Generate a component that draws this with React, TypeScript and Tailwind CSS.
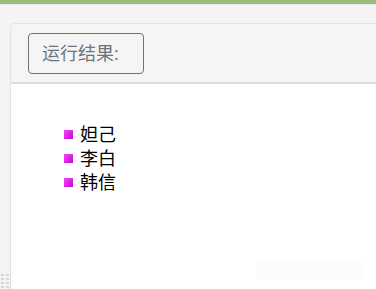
export default function App() {
  const heroes = ["妲己", "李白", "韩信"]

  return (
    <div
      className="relative h-[289px] w-[376px] overflow-hidden bg-[#f4f4f4]"
      style={{ fontFamily: '"Open Sans", "Noto Sans CJK SC", sans-serif' }}
    >
      {/* Top accent */}
      <div className="h-[4px] bg-[#9aba7a]" />
      <div className="h-px bg-[#e6e9ee]" />

      {/* Panel */}
      <div className="ml-[10px] mt-[18px] h-[300px] rounded-tl-[5px] border-l border-t border-[#e3e3e3] bg-white">
        <div className="flex h-[60px] items-center rounded-tl-[5px] border-b-2 border-[#dcdcdc] bg-[#f5f5f5] pl-[17px]">
          <button className="flex h-[41px] w-[116px] items-center rounded-[4px] border border-[#6c757d] pl-[13px] text-[18px] text-[#6c757d]">
            运行结果:
          </button>
        </div>

        <ul className="pl-[53px] pt-[38px] text-[18px] leading-[24px] text-black">
          {heroes.map((name) => (
            <li key={name} className="flex items-center">
              <span className="mr-[7px] h-[9px] w-[9px] bg-gradient-to-br from-[#ff40ff] to-[#b800d0]" />
              {name}
            </li>
          ))}
        </ul>
      </div>

      {/* Resize grip */}
      <div className="absolute bottom-0 left-0 grid grid-cols-2 gap-[2px] p-[1px]">
        {Array.from({ length: 8 }).map((_, i) => (
          <span key={i} className="h-[2px] w-[3px] bg-[#d6d6d6]" />
        ))}
      </div>

      {/* faint overlay */}
      <div className="absolute left-[257px] top-[261px] h-[19px] w-[106px] rounded-[2px] bg-[#fcfcfc]" />
    </div>
  )
}
